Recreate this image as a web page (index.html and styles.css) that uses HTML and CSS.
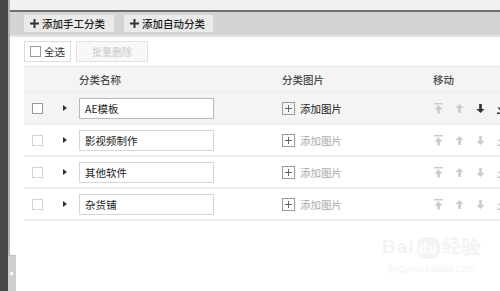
FILE: index.html
```html
<!DOCTYPE html>
<html lang="zh">
<head>
<meta charset="utf-8">
<link rel="stylesheet" href="styles.css">
</head>
<body>
<div class="app">
  <div class="sidebar"><div class="handle"><span class="dot"></span></div></div>
  <div class="main">
    <div class="topstrip"></div>
    <div class="toolbar">
      <button class="tbtn"><svg class="plus" viewBox="0 0 10 10"><path d="M5 0V10M0 5H10" stroke="#333" stroke-width="2.2"/></svg>添加手工分类</button>
      <button class="tbtn"><svg class="plus" viewBox="0 0 10 10"><path d="M5 0V10M0 5H10" stroke="#333" stroke-width="2.2"/></svg>添加自动分类</button>
    </div>
    <div class="content">
      <div class="actions">
        <label class="selall"><span class="cb"></span>全选</label>
        <button class="batch">批量删除</button>
      </div>
      <div class="table">
        <div class="row head">
          <div></div><div></div>
          <div class="hcell">分类名称</div>
          <div class="hcell">分类图片</div>
          <div class="hcell">移动</div>
        </div>
        <div class="row active">
          <div><span class="cb"></span></div>
          <div><span class="tri"></span></div>
          <div><div class="inp">AE模板</div></div>
          <div class="addimg"><span class="ibox"></span>添加图片</div>
          <div class="moves">
            <svg class="mv off" viewBox="0 0 10 12"><path d="M0 0H10V1.6H0Z M5 2.5L9.5 7H6.5V11.5H3.5V7H0.5Z"/></svg>
            <svg class="mv off" viewBox="0 0 10 12"><path d="M5 1L9.5 5.5H6.5V11H3.5V5.5H0.5Z"/></svg>
            <svg class="mv" viewBox="0 0 10 12"><path d="M5 11L9.5 6.5H6.5V1H3.5V6.5H0.5Z"/></svg>
            <svg class="mv" viewBox="0 0 10 12"><path d="M0 12H10V10.4H0Z M5 9.5L9.5 5H6.5V0.5H3.5V5H0.5Z"/></svg>
          </div>
        </div>
        <div class="row">
          <div><span class="cb light"></span></div>
          <div><span class="tri"></span></div>
          <div><div class="inp">影视频制作</div></div>
          <div class="addimg dim"><span class="ibox"></span>添加图片</div>
          <div class="moves">
            <svg class="mv off" viewBox="0 0 10 12"><path d="M0 0H10V1.6H0Z M5 2.5L9.5 7H6.5V11.5H3.5V7H0.5Z"/></svg>
            <svg class="mv off" viewBox="0 0 10 12"><path d="M5 1L9.5 5.5H6.5V11H3.5V5.5H0.5Z"/></svg>
            <svg class="mv off" viewBox="0 0 10 12"><path d="M5 11L9.5 6.5H6.5V1H3.5V6.5H0.5Z"/></svg>
            <svg class="mv off" viewBox="0 0 10 12"><path d="M0 12H10V10.4H0Z M5 9.5L9.5 5H6.5V0.5H3.5V5H0.5Z"/></svg>
          </div>
        </div>
        <div class="row">
          <div><span class="cb light"></span></div>
          <div><span class="tri"></span></div>
          <div><div class="inp">其他软件</div></div>
          <div class="addimg dim"><span class="ibox"></span>添加图片</div>
          <div class="moves">
            <svg class="mv off" viewBox="0 0 10 12"><path d="M0 0H10V1.6H0Z M5 2.5L9.5 7H6.5V11.5H3.5V7H0.5Z"/></svg>
            <svg class="mv off" viewBox="0 0 10 12"><path d="M5 1L9.5 5.5H6.5V11H3.5V5.5H0.5Z"/></svg>
            <svg class="mv off" viewBox="0 0 10 12"><path d="M5 11L9.5 6.5H6.5V1H3.5V6.5H0.5Z"/></svg>
            <svg class="mv off" viewBox="0 0 10 12"><path d="M0 12H10V10.4H0Z M5 9.5L9.5 5H6.5V0.5H3.5V5H0.5Z"/></svg>
          </div>
        </div>
        <div class="row">
          <div><span class="cb light"></span></div>
          <div><span class="tri"></span></div>
          <div><div class="inp">杂货铺</div></div>
          <div class="addimg dim"><span class="ibox"></span>添加图片</div>
          <div class="moves">
            <svg class="mv off" viewBox="0 0 10 12"><path d="M0 0H10V1.6H0Z M5 2.5L9.5 7H6.5V11.5H3.5V7H0.5Z"/></svg>
            <svg class="mv off" viewBox="0 0 10 12"><path d="M5 1L9.5 5.5H6.5V11H3.5V5.5H0.5Z"/></svg>
            <svg class="mv off" viewBox="0 0 10 12"><path d="M5 11L9.5 6.5H6.5V1H3.5V6.5H0.5Z"/></svg>
            <svg class="mv off" viewBox="0 0 10 12"><path d="M0 12H10V10.4H0Z M5 9.5L9.5 5H6.5V0.5H3.5V5H0.5Z"/></svg>
          </div>
        </div>
      </div>
      <div class="watermark">
        <div class="wm-logo">Bai<span class="wm-du">du</span>经验</div>
        <div class="wm-url">jingyan.baidu.com</div>
      </div>
    </div>
  </div>
</div>
</body>
</html>
```

FILE: styles.css
```css
* { box-sizing: border-box; }
html, body {
  margin: 0;
  padding: 0;
  width: 500px;
  height: 291px;
  overflow: hidden;
  background: #fff;
  font-family: "Noto Sans CJK SC", "Liberation Sans", sans-serif;
  font-size: 10.5px;
  color: #333;
}
.app {
  display: flex;
  width: 500px;
  height: 291px;
}
.sidebar {
  position: relative;
  width: 10px;
  flex: none;
  background: #474747;
  border-right: 2px solid #b4b4b4;
}
.handle {
  position: absolute;
  left: 8px;
  top: 255px;
  width: 8px;
  height: 36px;
  background: #cfcfcf;
  border-top: 1px solid #bdbdbd;
}
.handle .dot {
  position: absolute;
  left: 2px;
  top: 16px;
  width: 3px;
  height: 3px;
  background: #fff;
}
.main {
  flex: 1;
  display: flex;
  flex-direction: column;
  min-width: 0;
}
.topstrip {
  flex: none;
  height: 12px;
  background: #f1f1f1;
  border-bottom: 2px solid #6e6e6e;
}
.toolbar {
  flex: none;
  height: 25px;
  background: #d4d4d4;
  border-bottom: 2px solid #e4e4e4;
  display: flex;
  gap: 10px;
  padding: 3px 0 0 14px;
}
.tbtn {
  display: flex;
  align-items: center;
  height: 17px;
  padding: 0 0 0 6px;
  border: none;
  background: #eaeaea;
  font: inherit;
  font-size: 10.5px;
  font-weight: 500;
  color: #1e1e1e;
  white-space: nowrap;
  line-height: 17px;
}
.tbtn:first-child { width: 90px; }
.tbtn:last-child { width: 89px; }
.plus {
  width: 9px;
  height: 9px;
  margin-right: 3px;
  flex: none;
}
.content {
  flex: 1;
  position: relative;
  padding: 4px 0 0 14px;
}
.actions {
  display: flex;
  gap: 5px;
  height: 21px;
}
.selall {
  display: flex;
  align-items: center;
  width: 47px;
  height: 21px;
  border: 1px solid #dcdcdc;
  padding-left: 5px;
  color: #333;
  white-space: nowrap;
}
.selall .cb { margin-right: 3px; }
.batch {
  width: 72px;
  height: 21px;
  border: 1px solid #e2e2e2;
  background: #f8f8f8;
  font: inherit;
  font-size: 10px;
  color: #c8c8c8;
  padding: 0;
}
.cb {
  display: inline-block;
  width: 11px;
  height: 11px;
  border: 1px solid #9a9a9a;
  background: #fff;
}
.cb.light { border-color: #d2d2d2; }
.table {
  margin-top: 4px;
  width: 500px;
}
.row {
  display: grid;
  grid-template-columns: 31px 24px 203px 151px 1fr;
  align-items: center;
  height: 32px;
  border-bottom: 2px solid #efefef;
}
.row.head {
  height: 27px;
  background: #f4f4f4;
  border-top: 1px solid #e8e8e8;
  border-bottom: 1px solid #ececec;
}
.row.active { background: #f4f4f4; }
.row > div:first-child { padding-left: 8px; display: flex; }
.row > div:nth-child(2) { padding-left: 8px; display: flex; }
.hcell { color: #4a4a4a; font-weight: 500; }
.tri {
  width: 0;
  height: 0;
  border-top: 3px solid transparent;
  border-bottom: 3px solid transparent;
  border-left: 4px solid #333;
}
.inp {
  width: 135px;
  height: 21px;
  border: 1px solid #b9b9b9;
  background: #fff;
  padding-left: 5px;
  line-height: 19px;
  color: #222;
  white-space: nowrap;
}
.row:not(.active) .inp { border-color: #d6d6d6; }
.addimg {
  display: flex;
  align-items: center;
  color: #222;
  white-space: nowrap;
}
.addimg.dim { color: #aaa; }
.ibox {
  width: 13px;
  height: 13px;
  border: 1px solid #9a9a9a;
  margin-right: 5px;
  flex: none;
  background:
    linear-gradient(#666, #666) center / 7px 1px no-repeat,
    linear-gradient(#666, #666) center / 1px 7px no-repeat;
}
.moves {
  display: flex;
  gap: 12px;
  padding-left: 1px;
}
.mv {
  width: 9px;
  height: 11px;
  fill: #333;
  flex: none;
}
.mv.off { fill: #cccccc; }
.watermark {
  position: absolute;
  left: 372px;
  top: 199px;
  color: #f3f3f3;
  text-align: center;
}
.wm-logo {
  font-family: "Liberation Sans", sans-serif;
  font-size: 19px;
  font-weight: bold;
  line-height: 22px;
  letter-spacing: 1px;
}
.wm-du {
  display: inline-block;
  background: #f4f4f4;
  color: #fff;
  border-radius: 8px;
  padding: 0 2px;
  margin: 0 2px;
  font-size: 14px;
}
.wm-url {
  font-family: "Liberation Sans", sans-serif;
  font-size: 11px;
  line-height: 14px;
  margin-top: 2px;
}
```
